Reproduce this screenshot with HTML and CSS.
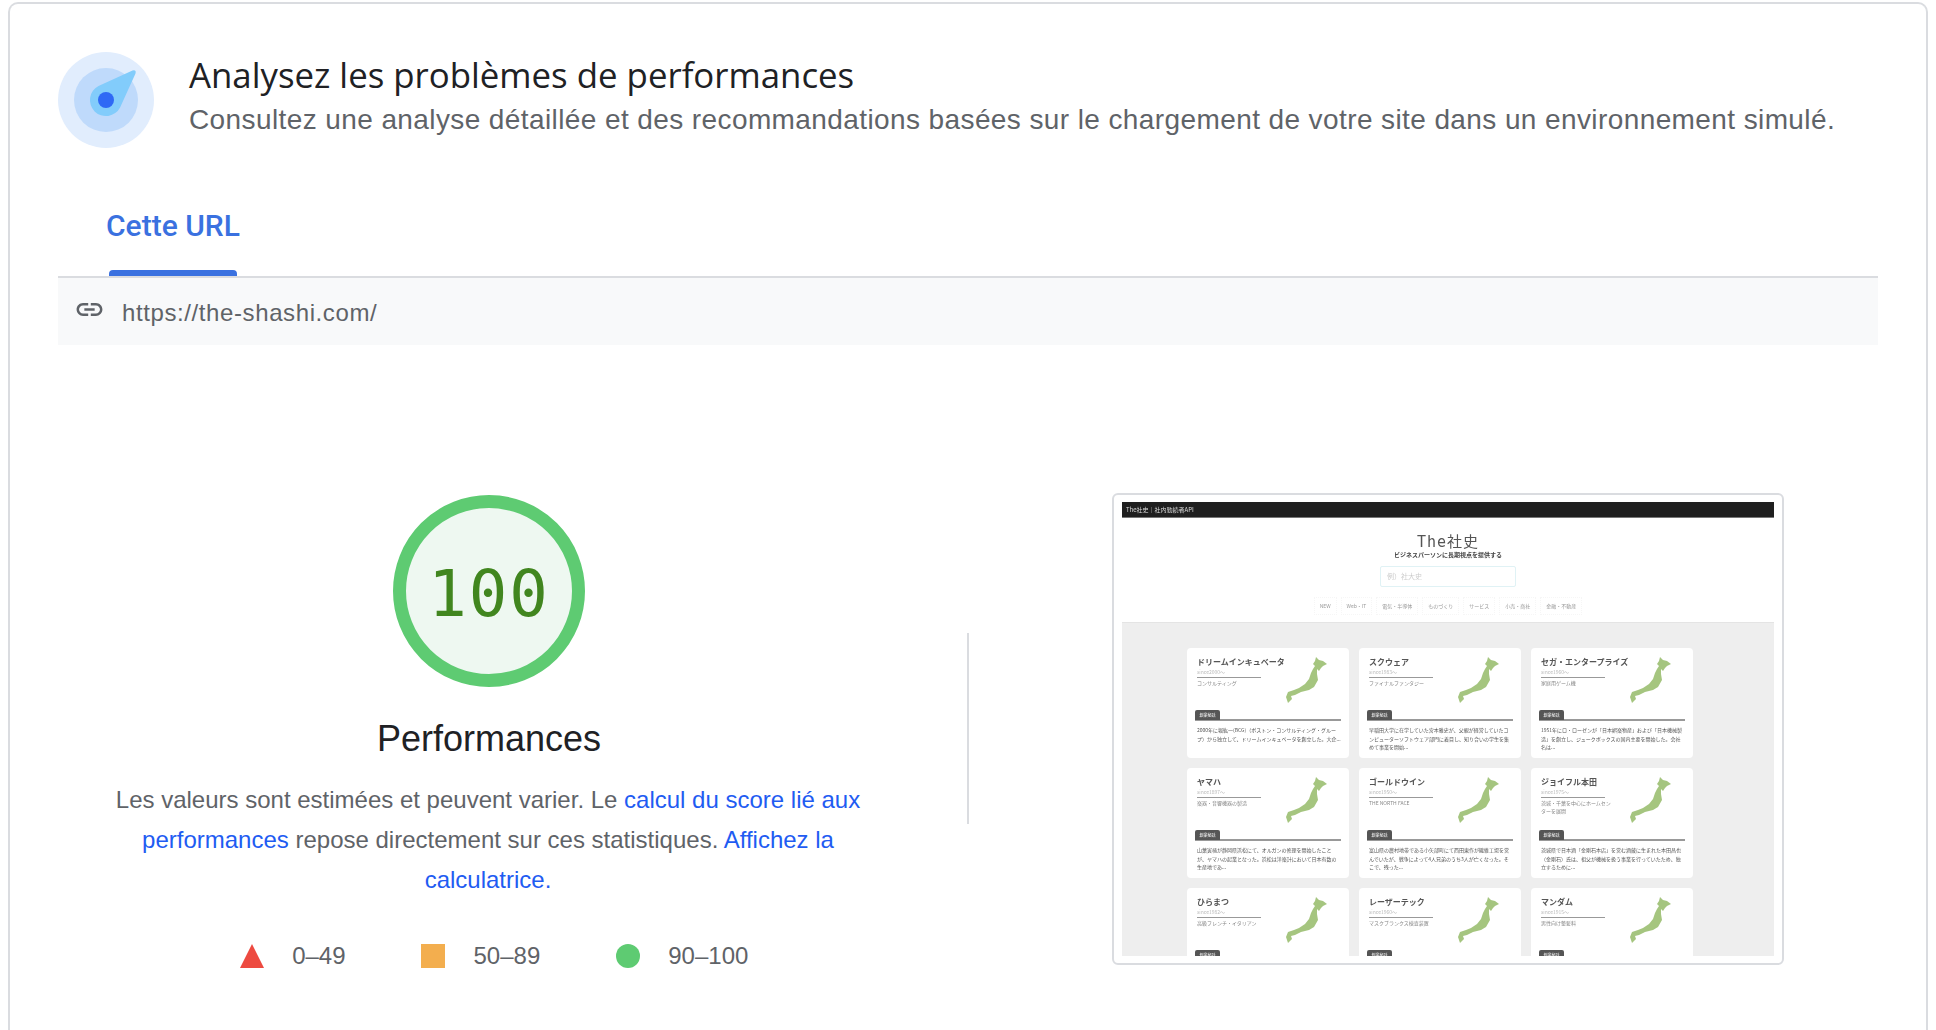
FILE: index.html
```html
<!DOCTYPE html>
<html lang="fr">
<head>
  <meta charset="UTF-8">
  <meta name="viewport" content="width=device-width, initial-scale=1.0">
  <title>Analysez les problèmes de performances</title>
  <link rel="stylesheet" href="styles.css">
</head>
<body>
  <svg class="defs" width="0" height="0" aria-hidden="true">
    <symbol id="japan" viewBox="0 0 41 46">
      <path d="M30 0L33 3L37 4L41 7L37 9L35 11L33 14L31 12L31 17L32 23L28 30L23 33L15 35L9 38L5 39L6 42L2 46L0 40L2 35L8 33L13 31L19 27L23 22L25 16L27 12L29 9L27 7L29 4Z"/>
    </symbol>
  </svg>

  <main class="card">
    <header class="head">
      <svg class="head-icon" viewBox="0 0 96 96">
        <circle cx="48" cy="48" r="48" fill="#e1edfd"/>
        <circle cx="48" cy="48" r="32" fill="#bfdafb"/>
        <path d="M40.500 33.900L74.500 18.500Q78.500 17.500 77.500 21.500L62.100 55.500A16 16 0 1 1 40.500 33.900z" fill="#82ccfb"/>
        <circle cx="48" cy="48" r="8" fill="#2f69f5"/>
      </svg>
      <div>
        <h1>Analysez les problèmes de performances</h1>
        <p>Consultez une analyse détaillée et des recommandations basées sur le chargement de votre site dans un environnement simulé.</p>
      </div>
    </header>

    <nav class="tabs">
      <a class="tab">Cette URL</a>
    </nav>
    <div class="url-bar">
      <svg class="link-icon" viewBox="0 0 24 24"><path d="M3.900 12c0-1.710 1.390-3.100 3.100-3.100h4V7H7c-2.760 0-5 2.240-5 5s2.240 5 5 5h4v-1.900H7c-1.710 0-3.100-1.390-3.100-3.100zM8 13h8v-2H8v2zm9-6h-4v1.900h4c1.710 0 3.100 1.390 3.100 3.100s-1.390 3.100-3.100 3.100h-4V17h4c2.760 0 5-2.240 5-5s-2.240-5-5-5z"/></svg>
      <span>https://the-shashi.com/</span>
    </div>

    <section class="report">
      <div class="score">
        <div class="gauge"><span>100</span></div>
        <h2>Performances</h2>
        <p class="score-text">Les valeurs sont estimées et peuvent varier. Le <a>calcul du score lié aux performances</a> repose directement sur ces statistiques. <a>Affichez la calculatrice.</a></p>
        <ul class="legend">
          <li><svg class="mark" viewBox="0 0 24 24"><path d="M12 0L24 24H0z" fill="#ed4a40"/></svg>0–49</li>
          <li><svg class="mark" viewBox="0 0 24 24"><path d="M0 0H24V24H0z" fill="#f3ae4e"/></svg>50–89</li>
          <li><svg class="mark" viewBox="0 0 24 24"><circle cx="12" cy="12" r="12" fill="#5ecb72"/></svg>90–100</li>
        </ul>
      </div>
      <div class="divider"></div>

      <div class="thumb">
        <div class="shot">
          <div class="shot-bar">The社史｜社内勤続者API</div>
          <div class="shot-head">
            <div class="shot-logo">The社史</div>
            <div class="shot-tag">ビジネスパーソンに長期視点を提供する</div>
            <div class="shot-search">例）社大史</div>
            <div class="shot-nav">
              <span>NEW</span><span>Web・IT</span><span>電気・半導体</span><span>ものづくり</span><span>サービス</span><span>小売・商社</span><span>金融・不動産</span>
            </div>
          </div>
          <div class="shot-grid">
            <article class="biz">
              <div class="biz-top">
                <div class="biz-info">
                  <h3>ドリームインキュベータ</h3>
                  <div class="since">since2000〜</div>
                  <div class="role">コンサルティング</div>
                </div>
                <svg class="map"><use href="#japan"/></svg>
              </div>
              <div class="biz-label"><span>創業秘話</span></div>
              <p>2000年に堀紘一(BCG)（ボストン・コンサルティング・グループ）から独立して、ドリームインキュベータを創立した。大企...</p>
            </article>
            <article class="biz">
              <div class="biz-top">
                <div class="biz-info">
                  <h3>スクウェア</h3>
                  <div class="since">since1983〜</div>
                  <div class="role">ファイナルファンタジー</div>
                </div>
                <svg class="map"><use href="#japan"/></svg>
              </div>
              <div class="biz-label"><span>創業秘話</span></div>
              <p>早稲田大学に在学していた宮本雅史が、父親が経営していたコンピューターソフトウェア部門に着目し、知り合いの学生を集めて事業を開始...</p>
            </article>
            <article class="biz">
              <div class="biz-top">
                <div class="biz-info">
                  <h3>セガ・エンタープライズ</h3>
                  <div class="since">since1960〜</div>
                  <div class="role">家庭用ゲーム機</div>
                </div>
                <svg class="map"><use href="#japan"/></svg>
              </div>
              <div class="biz-label"><span>創業秘話</span></div>
              <p>1951年にロ・ローゼンが「日本娯楽物産」および「日本機械製造」を創立し、ジュークボックスの国内主要を開始した。会社名は...</p>
            </article>
            <article class="biz">
              <div class="biz-top">
                <div class="biz-info">
                  <h3>ヤマハ</h3>
                  <div class="since">since1897〜</div>
                  <div class="role">楽器・音響機器の製造</div>
                </div>
                <svg class="map"><use href="#japan"/></svg>
              </div>
              <div class="biz-label"><span>創業秘話</span></div>
              <p>山葉寅楠が静岡県浜松にて、オルガンの修理を開始したことが、ヤマハの起業となった。浜松は洋楽計において日本有数の生産地であ...</p>
            </article>
            <article class="biz">
              <div class="biz-top">
                <div class="biz-info">
                  <h3>ゴールドウイン</h3>
                  <div class="since">since1950〜</div>
                  <div class="role">THE NORTH FACE</div>
                </div>
                <svg class="map"><use href="#japan"/></svg>
              </div>
              <div class="biz-label"><span>創業秘話</span></div>
              <p>富山県の農村地帯である小矢部町にて西田東作が繊維工場を営んでいたが、戦争によって4人兄弟のうち3人が亡くなった。そこで、残った...</p>
            </article>
            <article class="biz">
              <div class="biz-top">
                <div class="biz-info">
                  <h3>ジョイフル本田</h3>
                  <div class="since">since1975〜</div>
                  <div class="role">茨城・千葉を中心にホームセンターを展開</div>
                </div>
                <svg class="map"><use href="#japan"/></svg>
              </div>
              <div class="biz-label"><span>創業秘話</span></div>
              <p>茨城県で日本酒「金剛石本店」を営む酒蔵に生まれた本田昌也（金剛石）氏は、祖父が機械を扱う事業を行っていたため、独立するために...</p>
            </article>
            <article class="biz">
              <div class="biz-top">
                <div class="biz-info">
                  <h3>ひらまつ</h3>
                  <div class="since">since1982〜</div>
                  <div class="role">高級フレンチ・イタリアン</div>
                </div>
                <svg class="map"><use href="#japan"/></svg>
              </div>
              <div class="biz-label"><span>創業秘話</span></div>
            </article>
            <article class="biz">
              <div class="biz-top">
                <div class="biz-info">
                  <h3>レーザーテック</h3>
                  <div class="since">since1960〜</div>
                  <div class="role">マスクブランクス検査装置</div>
                </div>
                <svg class="map"><use href="#japan"/></svg>
              </div>
              <div class="biz-label"><span>創業秘話</span></div>
            </article>
            <article class="biz">
              <div class="biz-top">
                <div class="biz-info">
                  <h3>マンダム</h3>
                  <div class="since">since1915〜</div>
                  <div class="role">男性向け整髪料</div>
                </div>
                <svg class="map"><use href="#japan"/></svg>
              </div>
              <div class="biz-label"><span>創業秘話</span></div>
            </article>
          </div>
        </div>
      </div>
    </section>
  </main>
</body>
</html>
```

FILE: styles.css
```css
* {
  margin: 0;
  padding: 0;
  box-sizing: border-box;
}

body {
  font-family: 'Liberation Sans', Arial, sans-serif;
  background-color: white;
  color: #5f6368;
  height: 1030px;
  overflow: hidden;
  padding: 2px 8px 0;
}

.defs {
  position: absolute;
}

.card {
  border: 2px solid #dadce0;
  border-bottom: 0;
  border-radius: 10px 10px 0 0;
  padding: 48px 48px 0;
  height: 1028px;
}

/* header */
.head {
  display: flex;
  align-items: flex-start;
  gap: 35px;
}

.head-icon {
  width: 96px;
  height: 96px;
  flex: none;
}

.head h1 {
  font-family: 'Open Sans', sans-serif;
  font-size: 34.800px;
  font-weight: 400;
  line-height: 40px;
  color: #202124;
  margin-top: 3px;
}

.head p {
  font-size: 28px;
  line-height: 36px;
  letter-spacing: 0.4px;
  margin-top: 7px;
  white-space: nowrap;
}

/* tab */
.tabs {
  border-bottom: 2px solid #dadce0;
  padding: 58px 0 0 48px;
}

.tab {
  display: inline-block;
  position: relative;
  font-family: Roboto, sans-serif;
  font-size: 30px;
  font-weight: 500;
  line-height: 40px;
  color: #3a71e0;
  padding-bottom: 30px;
}

.tab::after {
  content: "";
  position: absolute;
  left: 3px;
  right: 3px;
  bottom: 0;
  height: 6px;
  background: #3a71e0;
  border-radius: 4px 4px 0 0;
}

.url-bar {
  display: flex;
  align-items: center;
  height: 67px;
  padding-left: 16px;
  gap: 17px;
  background: #f8f9fa;
  font-size: 24px;
  letter-spacing: 0.6px;
}

.url-bar span {
  margin-top: 2px;
}

.link-icon {
  width: 31px;
  height: 31px;
  fill: #5f6368;
  margin-top: -5px;
}

/* score */
.report {
  display: flex;
  align-items: flex-start;
  margin-top: 148px;
}

.score {
  width: 862px;
  display: flex;
  flex-direction: column;
  align-items: center;
  flex: none;
}

.gauge {
  width: 192px;
  height: 192px;
  margin-top: 2px;
  border: 13px solid #5ecb72;
  border-radius: 50%;
  background: #eef8f1;
  color: #41861f;
  font-family: 'DejaVu Sans Mono', monospace;
  font-size: 64px;
  letter-spacing: 2px;
  display: flex;
  align-items: center;
  justify-content: center;
}

.gauge span {
  margin-top: 5px;
}

.score h2 {
  font-size: 36px;
  font-weight: 400;
  line-height: 44px;
  color: #202124;
  margin-top: 30px;
}

.score-text {
  width: 760px;
  font-size: 24px;
  line-height: 40px;
  text-align: center;
  margin: 19px 2px 0 0;
}

.score-text a {
  color: #1f5cf2;
}

.legend {
  display: flex;
  list-style: none;
  gap: 75.500px;
  font-size: 24px;
  margin-top: 42px;
  padding-left: 10px;
}

.legend li {
  display: flex;
  align-items: center;
  gap: 28.500px;
}

.mark {
  width: 24px;
  height: 24px;
}

.divider {
  width: 2px;
  height: 191px;
  background: #dadce0;
  margin: 140px 0 0 47px;
  flex: none;
}

/* page thumbnail */
.thumb {
  width: 672px;
  height: 472px;
  margin-left: 143px;
  padding: 7px 8px;
  border: 2px solid #dadce0;
  border-radius: 6px;
  flex: none;
}

.shot {
  height: 100%;
  overflow: hidden;
  background: #eeeeee;
  font-family: 'Noto Sans CJK JP', sans-serif;
  color: #444;
  filter: blur(0.7px);
}

.shot-bar {
  height: 16px;
  background: #1f1f1f;
  border-bottom: 1px solid #777;
  color: #ddd;
  font-size: 6px;
  line-height: 15px;
  padding-left: 4px;
}

.shot-head {
  height: 105px;
  background: white;
  display: flex;
  flex-direction: column;
  align-items: center;
  border-bottom: 1px solid #e4e4e4;
}

.shot-logo {
  font-family: 'DejaVu Sans Mono', 'Noto Sans CJK JP', monospace;
  font-size: 15px;
  letter-spacing: 1px;
  line-height: 16px;
  margin-top: 16px;
  color: #555;
}

.shot-tag {
  font-size: 6px;
  font-weight: 700;
  line-height: 8px;
  margin-top: 1px;
}

.shot-search {
  width: 136px;
  height: 21px;
  margin-top: 7px;
  padding-left: 6px;
  border: 1px solid #e0f2f5;
  border-radius: 2px;
  font-size: 7px;
  line-height: 19px;
  color: #ccc;
}

.shot-nav {
  display: flex;
  gap: 4px;
  margin-top: 10px;
}

.shot-nav span {
  font-size: 5px;
  line-height: 16px;
  padding: 0 5px;
  color: #999;
  border: 1px dotted #f6f6f6;
}

.shot-grid {
  display: grid;
  grid-template-columns: repeat(3, 162px);
  grid-auto-rows: 110px;
  gap: 10px;
  padding: 25px 0 0 65px;
}

.biz {
  background: white;
  border-radius: 4px;
  padding: 9px 8px 0 8px;
}

.biz-top {
  height: 53px;
  display: flex;
  justify-content: space-between;
  padding-left: 2px;
  padding-right: 14px;
}

.biz-info {
  display: flex;
  flex-direction: column;
  align-items: flex-start;
  width: 72px;
}

.biz h3 {
  font-size: 8px;
  font-weight: 700;
  line-height: 10px;
  color: #555;
  white-space: nowrap;
}

.since {
  font-size: 5px;
  line-height: 9px;
  color: #bbb;
  border-bottom: 1px solid #999;
  align-self: stretch;
  margin-right: 8px;
  padding-bottom: 1px;
}

.role {
  font-size: 5px;
  line-height: 8px;
  color: #888;
  margin-top: 1px;
}

.map {
  width: 41px;
  height: 46px;
  flex: none;
  fill: #a5c57f;
}

.biz-label {
  border-bottom: 2px solid #999;
  height: 11px;
}

.biz-label span {
  display: block;
  width: 25px;
  height: 10px;
  background: #555;
  border-radius: 2px 2px 0 0;
  color: white;
  font-size: 4px;
  line-height: 10px;
  text-align: center;
}

.biz p {
  font-size: 5px;
  line-height: 8.5px;
  color: #555;
  margin-top: 5px;
  padding-left: 2px;
}
```
